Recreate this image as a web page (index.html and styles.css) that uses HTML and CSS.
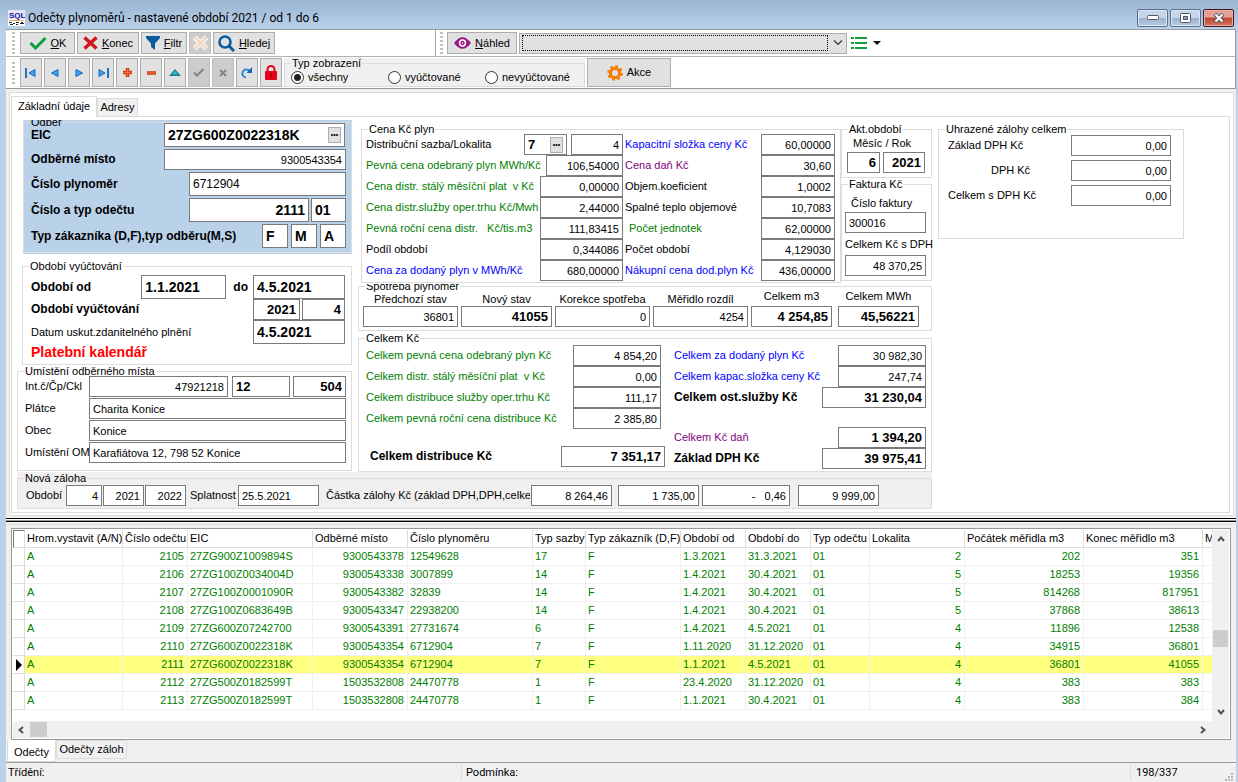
FILE: index.html
```html
<!DOCTYPE html>
<html lang="cs">
<head>
<meta charset="utf-8">
<title>Odečty plynoměrů</title>
<link rel="stylesheet" href="styles.css">
</head>
<body>
<div class="window">
<header class="titlebar">
  <svg class="app-icon" width="17" height="16" viewBox="0 0 17 16"><rect width="17" height="16" fill="#fff"/><rect y="0" width="17" height="9" fill="#e8e4f4"/><text x="1" y="8" class="logo-sql">SQL</text><path d="M1 10.500h15" stroke="#f6a56a"/><path d="M1 12.500h3M5 13.500h2M8 12.500h3M12 13.500h4M2 14.500h3M8 14.500h2M13 12.500h2" stroke="#222"/></svg>
  <h1>Odečty plynoměrů - nastavené období 2021 / od 1 do 6</h1>
  <div class="caption-buttons">
    <button class="cap" aria-label="Minimalizovat"><svg width="12" height="6" viewBox="0 0 12 6"><rect x=".5" y=".5" width="11" height="4" rx="1" fill="#fff" stroke="#535666"/></svg></button>
    <button class="cap" aria-label="Maximalizovat"><svg width="12" height="10" viewBox="0 0 12 10"><rect x=".5" y=".5" width="10" height="9" rx="1" fill="#fff" stroke="#535666"/><rect x="3.500" y="3.500" width="4" height="3" fill="#8fa9c8" stroke="#535666"/></svg></button>
    <button class="cap close" aria-label="Zavřít"><svg width="12" height="10" viewBox="0 0 12 10"><path d="M2 1l8 8M10 1L2 9" stroke="#535666" stroke-width="4"/><path d="M2.500 1.500l7 7M9.500 1.500l-7 7" stroke="#fff" stroke-width="2.200"/></svg></button>
  </div>
</header>

<div class="client">
<div class="toolbar row-one">
  <div class="band band-main">
    <span class="grip"></span>
    <button class="btn w-ok"><svg width="18" height="14" viewBox="0 0 18 14"><path d="M1.500 7l5 5L16.500 2" fill="none" stroke="#0f9d3f" stroke-width="3"/></svg><span><u>O</u>K</span></button>
    <button class="btn w-konec"><svg width="15" height="14" viewBox="0 0 15 14"><path d="M1.500 1.500l12 11M13.500 1.500l-12 11" stroke="#d2151c" stroke-width="3.500"/></svg><span><u>K</u>onec</span></button>
    <button class="btn w-filtr"><svg width="14" height="14" viewBox="0 0 14 14"><path d="M0 0h14v2L9 7.500V14L5 11V7.500L0 2z" fill="#0b5c9e"/></svg><span><u>F</u>iltr</span></button>
    <button class="btn w-clear off" disabled aria-label="Zrušit filtr"><svg width="17" height="16" viewBox="0 0 17 16"><path d="M2.500 2.500l12 11M14.500 2.500l-12 11" stroke="#fff" stroke-width="5"/><path d="M2.500 2.500l12 11M14.500 2.500l-12 11" stroke="#f0d8c4" stroke-width="3"/></svg></button>
    <button class="btn w-hledej"><svg width="17" height="17" viewBox="0 0 17 17"><circle cx="7" cy="7" r="5.500" fill="none" stroke="#0b5c9e" stroke-width="2.600"/><path d="M11 11l5 5" stroke="#0b5c9e" stroke-width="3"/></svg><span><u>H</u>ledej</span></button>
  </div>
  <div class="band band-view">
    <span class="grip"></span>
    <button class="btn w-nahled"><svg width="17" height="12" viewBox="0 0 17 12"><path d="M0 6Q8.500-5.500 17 6Q8.500 17.500 0 6z" fill="#9b1889"/><circle cx="8.500" cy="6" r="3.700" fill="#fff"/><circle cx="8.500" cy="6" r="2.200" fill="#9b1889"/><circle cx="8.500" cy="6" r=".8" fill="#fff"/></svg><span><u>N</u>áhled</span></button>
    <div class="combo"><select aria-label="Sestava"><option></option></select><svg width="10" height="6" viewBox="0 0 10 6"><path d="M1 .5l4 4 4-4" fill="none" stroke="#333" stroke-width="1.200"/></svg></div>
    <button class="bare" aria-label="Seznam"><svg width="16" height="12" viewBox="0 0 16 12"><path d="M0 1h3M4 1h12M0 6h3M4 6h12M0 11h3M4 11h12" stroke="#0f9d3f" stroke-width="2"/></svg><svg width="8" height="4" viewBox="0 0 8 4"><path d="M0 0h8L4 4z" fill="#111"/></svg></button>
  </div>
</div>

<div class="toolbar row-two">
  <span class="grip"></span>
  <button class="nav" aria-label="První"><svg width="14" height="10" viewBox="0 0 14 10"><path d="M2 0v10" stroke="#1e73c8" stroke-width="2"/><path d="M11 1.500v7L5 5z" fill="#3fa2ee" stroke="#1266c4"/></svg></button>
  <button class="nav" aria-label="Předchozí"><svg width="10" height="10" viewBox="0 0 10 10"><path d="M8 1.500v7L1.500 5z" fill="#3fa2ee" stroke="#1266c4"/></svg></button>
  <button class="nav" aria-label="Další"><svg width="10" height="10" viewBox="0 0 10 10"><path d="M2 1.500v7L8.500 5z" fill="#3fa2ee" stroke="#1266c4"/></svg></button>
  <button class="nav" aria-label="Poslední"><svg width="14" height="10" viewBox="0 0 14 10"><path d="M12 0v10" stroke="#1e73c8" stroke-width="2"/><path d="M3 1.500v7L9 5z" fill="#3fa2ee" stroke="#1266c4"/></svg></button>
  <button class="nav" aria-label="Přidat"><svg width="11" height="11" viewBox="0 0 11 11"><path d="M5.500 1v9M1 5.500h9" stroke="#c23a0a" stroke-width="3.500"/><path d="M5.500 1.500v8M1.500 5.500h8" stroke="#ff6a33" stroke-width="1.400"/></svg></button>
  <button class="nav" aria-label="Odebrat"><svg width="11" height="4" viewBox="0 0 11 4"><path d="M1 2h9" stroke="#c23a0a" stroke-width="3.500"/><path d="M1.500 2h8" stroke="#ff6a33" stroke-width="1.400"/></svg></button>
  <button class="nav" aria-label="Upravit"><svg width="12" height="7" viewBox="0 0 12 7"><path d="M6 0l6 7H0z" fill="#167f8c"/><path d="M6 1.500L9 5.500H3z" fill="#35bcc4"/></svg></button>
  <button class="nav off" disabled aria-label="Uložit"><svg width="12" height="9" viewBox="0 0 12 9"><path d="M1 4.500l3 3 6.500-6.500" fill="none" stroke="#858585" stroke-width="2.200"/></svg></button>
  <button class="nav off" disabled aria-label="Storno"><svg width="8" height="8" viewBox="0 0 8 8"><path d="M1 1l6 6M7 1L1 7" stroke="#858585" stroke-width="2"/></svg></button>
  <button class="nav" aria-label="Obnovit"><svg width="12" height="12" viewBox="0 0 12 12"><path d="M5 10.500A4 4 0 1 1 8.500 4" fill="none" stroke="#2787d2" stroke-width="2"/><path d="M11 0v6H5.500z" fill="#1266c4"/></svg></button>
  <button class="nav" aria-label="Zámek"><svg width="14" height="15" viewBox="0 0 14 15"><path d="M3.500 7V4.500a3.500 3.500 0 0 1 7 0V7" fill="none" stroke="#e2001a" stroke-width="2"/><rect x="1" y="6" width="12" height="9" rx="1" fill="#e2001a"/><path d="M7 8.500v3.500" stroke="#a00" stroke-width="2"/></svg></button>
  <div class="view-type">
    <fieldset class="group">
      <legend>Typ zobrazení</legend>
      <label><input type="radio" name="typ" checked>všechny</label>
      <label><input type="radio" name="typ">vyúčtované</label>
      <label><input type="radio" name="typ">nevyúčtované</label>
    </fieldset>
  </div>
  <button class="btn akce"><svg width="16" height="16" viewBox="0 0 16 16"><circle cx="8" cy="8" r="6.600" fill="none" stroke="#f57c00" stroke-width="2.400" stroke-dasharray="2.800 2.380"/><circle cx="8" cy="8" r="4.600" fill="none" stroke="#f57c00" stroke-width="3"/></svg><span>Akce</span></button>
</div>

<main class="form-frame">
  <nav class="tabs top-tabs"><button class="tab active">Základní údaje</button><button class="tab">Adresy</button></nav>
  <div class="form">
    <div class="col-left">
      <div class="blue-box">
        <fieldset class="group odber">
          <legend class="cut">Odběr</legend>
          <div class="row tall"><label class="b" for="eic">EIC</label><span class="picker eic w181"><input id="eic" class="big" value="27ZG600Z0022318K"><button aria-label="Vybrat EIC">•••</button></span></div>
          <div class="row"><label class="b" for="om">Odběrné místo</label><input id="om" class="num w182" value="9300543354"></div>
          <div class="row tall"><label class="b" for="cp">Číslo plynoměr</label><input id="cp" class="mid w157" value="6712904"></div>
          <div class="row tall"><label class="b" for="co">Číslo a typ odečtu</label><input id="co" class="num big w120" value="2111"><input class="big w35" value="01" aria-label="Typ odečtu"></div>
          <div class="row tall wide-gap"><label class="b" for="tz">Typ zákazníka (D,F),typ odběru(M,S)</label><input id="tz" class="big w26" value="F"><input class="big w26" value="M" aria-label="Typ odběru"><input class="big w26" value="A" aria-label="Vystavit"></div>
        </fieldset>
      </div>
      <fieldset class="group obdobi">
        <legend>Období vyúčtování</legend>
        <div class="row tall"><label class="b" for="od">Období od</label><input id="od" class="big w85" value="1.1.2021"><label class="b do" for="do">do</label><input id="do" class="big w92" value="4.5.2021"></div>
        <div class="row"><label class="b" for="ov">Období vyúčtování</label><input id="ov" class="num bold w47" value="2021"><input class="num bold w43" value="4" aria-label="Měsíc"></div>
        <div class="row tall"><label for="du">Datum uskut.zdanitelného plnění</label><input id="du" class="big w92" value="4.5.2021"></div>
        <a class="calendar" href="#">Platební kalendář</a>
      </fieldset>
      <fieldset class="group umisteni">
        <legend>Umístění odběrného místa</legend>
        <div class="row"><label for="ic">Int.č/Čp/Ckl</label><input id="ic" class="num w139" value="47921218"><input class="bold grow-a" value="12" aria-label="Čp"><input class="num bold w53" value="504" aria-label="Ckl"></div>
        <div class="row"><label for="pl">Plátce</label><input id="pl" class="grow" value="Charita Konice"></div>
        <div class="row"><label for="ob">Obec</label><input id="ob" class="grow" value="Konice"></div>
        <div class="row"><label for="uo">Umístění OM</label><input id="uo" class="grow" value="Karafiátova 12, 798 52 Konice"></div>
      </fieldset>
    </div>

    <div class="col-mid">
      <div class="upper">
        <fieldset class="group cena">
          <legend>Cena Kč plyn</legend>
          <div class="row"><label for="ds">Distribuční sazba/Lokalita</label><span class="picker w43"><input id="ds" class="bold" value="7"><button aria-label="Vybrat sazbu">•••</button></span><input class="num w52 g2" value="4" aria-label="Lokalita"><label class="second blue" for="ks">Kapacitní složka ceny Kč</label><input id="ks" class="num w74" value="60,00000"></div>
          <div class="row"><label class="green" for="pc">Pevná cena odebraný plyn MWh/Kč</label><input id="pc" class="num w77" value="106,54000"><label class="second purple" for="cd">Cena daň Kč</label><input id="cd" class="num w74" value="30,60"></div>
          <div class="row"><label class="green" for="cs">Cena distr. stálý měsíční plat&nbsp; v Kč</label><input id="cs" class="num w83" value="0,00000"><label class="second" for="ok">Objem.koeficient</label><input id="ok" class="num w74" value="1,0002"></div>
          <div class="row"><label class="green" for="ct">Cena distr.služby oper.trhu Kč/Mwh</label><input id="ct" class="num w83" value="2,44000"><label class="second" for="st">Spalné teplo objemové</label><input id="st" class="num w74" value="10,7083"></div>
          <div class="row"><label class="green" for="pr">Pevná roční cena distr.&nbsp;&nbsp; Kč/tis.m3</label><input id="pr" class="num w83" value="111,83415"><label class="second green indent" for="pj">Počet jednotek</label><input id="pj" class="num w74" value="62,00000"></div>
          <div class="row"><label for="po">Podíl období</label><input id="po" class="num w83" value="0,344086"><label class="second" for="pob">Počet období</label><input id="pob" class="num w74" value="4,129030"></div>
          <div class="row"><label class="blue" for="cz">Cena za dodaný plyn v MWh/Kč</label><input id="cz" class="num w83" value="680,00000"><label class="second blue" for="nc">Nákupní cena dod.plyn Kč</label><input id="nc" class="num w74" value="436,00000"></div>
        </fieldset>
        <div class="stack">
          <fieldset class="group akt">
            <legend>Akt.období</legend>
            <label class="over" for="am">Měsíc / Rok</label>
            <div class="row"><input id="am" class="num bold w33" value="6"><input class="num bold w42" value="2021" aria-label="Rok"></div>
          </fieldset>
          <fieldset class="group faktura">
            <legend>Faktura Kč</legend>
            <label class="over" for="cf">Číslo faktury</label>
            <input id="cf" class="w81" value="300016">
            <label class="under" for="cc">Celkem Kč s DPH</label>
            <input id="cc" class="num w81" value="48 370,25">
          </fieldset>
        </div>
      </div>
      <fieldset class="group spotreba">
        <legend class="cut">Spotřeba plynoměr</legend>
        <div class="cell w95"><label for="s1">Předchozí stav</label><input id="s1" class="num" value="36801"></div>
        <div class="cell w91"><label for="s2">Nový stav</label><input id="s2" class="num bold" value="41055"></div>
        <div class="cell w95"><label for="s3">Korekce spotřeba</label><input id="s3" class="num" value="0"></div>
        <div class="cell w95"><label for="s4">Měřidlo rozdíl</label><input id="s4" class="num" value="4254"></div>
        <div class="cell w81 up"><label for="s5">Celkem m3</label><input id="s5" class="num bold" value="4 254,85"></div>
        <div class="cell w81 up last"><label for="s6">Celkem MWh</label><input id="s6" class="num bold" value="45,56221"></div>
      </fieldset>
      <fieldset class="group celkem">
        <legend>Celkem Kč</legend>
        <div class="half first">
          <div class="row"><label class="green" for="c1">Celkem pevná cena odebraný plyn Kč</label><input id="c1" class="num w88" value="4 854,20"></div>
          <div class="row"><label class="green" for="c2">Celkem distr. stálý měsíční plat&nbsp; v Kč</label><input id="c2" class="num w88" value="0,00"></div>
          <div class="row"><label class="green" for="c3">Celkem distribuce služby oper.trhu Kč</label><input id="c3" class="num w88" value="111,17"></div>
          <div class="row"><label class="green" for="c4">Celkem pevná roční cena distribuce Kč</label><input id="c4" class="num w88" value="2 385,80"></div>
          <div class="row sum"><label class="b" for="c5">Celkem distribuce Kč</label><input id="c5" class="num bold w104" value="7 351,17"></div>
        </div>
        <div class="half">
          <div class="row"><label class="blue" for="d1">Celkem za dodaný plyn Kč</label><input id="d1" class="num w88" value="30 982,30"></div>
          <div class="row"><label class="blue" for="d2">Celkem kapac.složka ceny Kč</label><input id="d2" class="num w88" value="247,74"></div>
          <div class="row"><label class="b" for="d3">Celkem ost.služby Kč</label><input id="d3" class="num bold w104" value="31 230,04"></div>
          <div class="row tax"><label class="purple" for="d4">Celkem Kč daň</label><input id="d4" class="num bold w88" value="1 394,20"></div>
          <div class="row"><label class="b" for="d5">Základ DPH Kč</label><input id="d5" class="num bold w104" value="39 975,41"></div>
        </div>
      </fieldset>
    </div>

    <div class="col-right">
      <fieldset class="group uhrazene">
        <legend>Uhrazené zálohy celkem</legend>
        <div class="row"><label for="u1">Základ DPH Kč</label><input id="u1" class="num w100" value="0,00"></div>
        <div class="row"><label class="shift" for="u2">DPH Kč</label><input id="u2" class="num w100" value="0,00"></div>
        <div class="row"><label for="u3">Celkem s DPH Kč</label><input id="u3" class="num w100" value="0,00"></div>
      </fieldset>
    </div>

    <div class="advance">
      <fieldset class="group zaloha">
        <legend>Nová záloha</legend>
        <label class="z-obdobi" for="z1">Období</label><input id="z1" class="num w36" value="4"><input class="num w41" value="2021" aria-label="Rok od"><input class="num w41" value="2022" aria-label="Rok do">
        <label class="z-splat" for="z4">Splatnost</label><input id="z4" class="w81" value="25.5.2021">
        <label class="z-castka" for="z5">Částka zálohy Kč (základ DPH,DPH,celkem</label><input id="z5" class="num w81" value="8 264,46"><input class="num w81 g5" value="1 735,00" aria-label="DPH"><input class="num w88 g3" value="-&nbsp;&nbsp; 0,46" aria-label="Zaokrouhlení"><input class="num w81 g8" value="9 999,00" aria-label="Celkem">
      </fieldset>
    </div>
  </div>
</main>

<div class="splitter"></div>

<section class="list-frame">
  <div class="grid-box">
    <div class="grid-view">
      <div class="table-clip">
      <table>
        <colgroup><col class="c12"><col class="c98"><col class="c65"><col class="c125"><col class="c95"><col class="c125"><col class="c53"><col class="c95"><col class="c65"><col class="c65"><col class="c59"><col class="c95"><col class="c119"><col class="c119"><col class="c60"></colgroup>
        <thead><tr><th class="corner"></th><th>Hrom.vystavit (A/N)</th><th>Číslo odečtu</th><th>EIC</th><th>Odběrné místo</th><th>Číslo plynoměru</th><th>Typ sazby</th><th>Typ zákazník (D,F)</th><th>Období od</th><th>Období do</th><th>Typ odečtu</th><th>Lokalita</th><th>Počátek měřidla m3</th><th>Konec měřidlo m3</th><th>Měřidlo</th></tr></thead>
        <tbody>
          <tr><td></td><td>A</td><td class="r">2105</td><td>27ZG900Z1009894S</td><td class="r">9300543378</td><td>12549628</td><td>17</td><td>F</td><td>1.3.2021</td><td>31.3.2021</td><td>01</td><td class="r">2</td><td class="r">202</td><td class="r">351</td><td></td></tr>
          <tr><td></td><td>A</td><td class="r">2106</td><td>27ZG100Z0034004D</td><td class="r">9300543338</td><td>3007899</td><td>14</td><td>F</td><td>1.4.2021</td><td>30.4.2021</td><td>01</td><td class="r">5</td><td class="r">18253</td><td class="r">19356</td><td></td></tr>
          <tr><td></td><td>A</td><td class="r">2107</td><td>27ZG100Z0001090R</td><td class="r">9300543382</td><td>32839</td><td>14</td><td>F</td><td>1.4.2021</td><td>30.4.2021</td><td>01</td><td class="r">5</td><td class="r">814268</td><td class="r">817951</td><td></td></tr>
          <tr><td></td><td>A</td><td class="r">2108</td><td>27ZG100Z0683649B</td><td class="r">9300543347</td><td>22938200</td><td>14</td><td>F</td><td>1.4.2021</td><td>30.4.2021</td><td>01</td><td class="r">5</td><td class="r">37868</td><td class="r">38613</td><td></td></tr>
          <tr><td></td><td>A</td><td class="r">2109</td><td>27ZG600Z07242700</td><td class="r">9300543391</td><td>27731674</td><td>6</td><td>F</td><td>1.4.2021</td><td>4.5.2021</td><td>01</td><td class="r">4</td><td class="r">11896</td><td class="r">12538</td><td></td></tr>
          <tr><td></td><td>A</td><td class="r">2110</td><td>27ZG600Z0022318K</td><td class="r">9300543354</td><td>6712904</td><td>7</td><td>F</td><td>1.11.2020</td><td>31.12.2020</td><td>01</td><td class="r">4</td><td class="r">34915</td><td class="r">36801</td><td></td></tr>
          <tr class="current"><td class="mark"><svg width="6" height="12" viewBox="0 0 6 12"><path d="M0 0l6 6-6 6z" fill="#000"/></svg></td><td>A</td><td class="r">2111</td><td>27ZG600Z0022318K</td><td class="r">9300543354</td><td>6712904</td><td>7</td><td>F</td><td>1.1.2021</td><td>4.5.2021</td><td>01</td><td class="r">4</td><td class="r">36801</td><td class="r">41055</td><td></td></tr>
          <tr><td></td><td>A</td><td class="r">2112</td><td>27ZG500Z0182599T</td><td class="r">1503532808</td><td>24470778</td><td>1</td><td>F</td><td>23.4.2020</td><td>31.12.2020</td><td>01</td><td class="r">4</td><td class="r">383</td><td class="r">383</td><td></td></tr>
          <tr><td></td><td>A</td><td class="r">2113</td><td>27ZG500Z0182599T</td><td class="r">1503532808</td><td>24470778</td><td>1</td><td>F</td><td>1.1.2021</td><td>30.4.2021</td><td>01</td><td class="r">4</td><td class="r">383</td><td class="r">384</td><td></td></tr>
        </tbody>
      </table>
      </div>
      <div class="vscroll"><svg width="8" height="6" viewBox="0 0 8 6"><path d="M1 5l3-3.500L7 5" fill="none" stroke="#505050" stroke-width="2"/></svg><span class="space-a"></span><span class="thumb"></span><span class="space-b"></span><svg width="8" height="6" viewBox="0 0 8 6"><path d="M1 1l3 3.500L7 1" fill="none" stroke="#505050" stroke-width="2"/></svg></div>
    </div>
    <div class="hscroll"><svg width="6" height="8" viewBox="0 0 6 8"><path d="M5 1L1.500 4 5 7" fill="none" stroke="#505050" stroke-width="2"/></svg><span class="thumb"></span><span class="rest"></span><svg width="6" height="8" viewBox="0 0 6 8"><path d="M1 1l3.500 3L1 7" fill="none" stroke="#505050" stroke-width="2"/></svg></div>
  </div>
  <nav class="tabs bottom-tabs"><button class="tab active">Odečty</button><button class="tab">Odečty záloh</button></nav>
</section>

<footer class="status">
  <span class="s-sort">Třídění:</span><span class="s-cond">Podmínka:</span><span class="s-pos">198/337</span>
  <svg width="9" height="9" viewBox="0 0 9 9"><path d="M6 1h2M3 4h2M6 4h2M0 7h2M3 7h2M6 7h2" stroke="#b8b8b8" stroke-width="2"/></svg>
</footer>
</div>
</div>
</body>
</html>
```
FILE: styles.css
```css
* { box-sizing: border-box; }
body { margin: 0; background: #bad1ea; font: 11px/13px "Liberation Sans", Arial, sans-serif; color: #000; }
button, input, select { font: inherit; color: inherit; margin: 0; border-radius: 0; }
button { padding: 0; }
svg { display: block; flex: none; }
fieldset { margin: 0; padding: 0; min-width: 0; }

.window { display: flex; flex-direction: column; min-height: 100vh; }
.titlebar { display: flex; align-items: center; height: 29px; padding: 6px 4px 0 8px; gap: 3px; background: linear-gradient(#99b4d1, #bad1ea); }
.titlebar h1 { flex: 1; margin: 0; font: 12px/18px Roboto, sans-serif; }
.logo-sql { font: bold 8px "Liberation Sans", sans-serif; fill: #1a1aa0; }
.caption-buttons { display: flex; gap: 2px; }
.cap { display: flex; align-items: center; justify-content: center; width: 31px; height: 18px; border: 1px solid #5d6f8c; border-radius: 2px; background: linear-gradient(#c6d6ea 50%, #9bb2cf 50%, #b7cce4); box-shadow: inset 0 0 0 1px #dbe7f5; }
.close { border-color: #47121c; background: linear-gradient(#e3a195 45%, #bd4530 50%, #d37560); box-shadow: inset 0 0 0 1px #e7b3a8; }

.client { flex: 1; display: flex; flex-direction: column; margin: 0 2px 0 6px; background: #f0f0f0; border-top: 1px solid #999; }
.toolbar { display: flex; background: #fff; border-right: 1px solid #999; }
.row-one { height: 27px; border-bottom: 1px solid #b4b4b4; }
.row-two { height: 32px; align-items: center; gap: 2px; padding-left: 5px; border-bottom: 1px solid #999; }
.band { display: flex; align-items: center; gap: 2px; padding-left: 5px; }
.band-main { width: 430px; border-right: 1px solid #aaa; }
.band-view { flex: 1; padding-left: 4px; }
.grip { width: 3px; height: 22px; margin: 0 3px 0 1px; background: repeating-linear-gradient(#c0c0c0 0 2px, #fff 2px 4px); }
.band-view .grip { margin: 0 2px 0 0; }
.btn { display: flex; align-items: center; justify-content: center; gap: 4px; height: 22px; background: #e1e1e1; border: 1px solid #adadad; }
.off { background: #ccc; border-color: #bfbfbf; }
.w-ok { width: 55px; }
.w-konec { width: 62px; }
.w-filtr { width: 46px; }
.w-clear { width: 22px; }
.w-hledej { width: 62px; }
.w-nahled { width: 70px; }
.combo { display: flex; align-items: center; width: 328px; height: 21px; padding: 2px 3px 2px 2px; gap: 5px; background: #e1e1e1; border: 1px solid #adadad; }
.combo select { flex: 1; height: 16px; appearance: none; background: none; border: 1px dotted #000; }
.bare { display: flex; align-items: center; gap: 6px; margin-left: 2px; border: 0; background: none; }
.nav { display: flex; align-items: center; justify-content: center; width: 22px; height: 29px; background: #e1e1e1; border: 1px solid #adadad; }
.nav.off { background: #ccc; border-color: #bfbfbf; }
.akce { width: 84px; height: 29px; }
.view-type { width: 301px; height: 29px; padding-top: 5px; background: #f0f0f0; }
.view-type .group { display: flex; height: 24px; padding: 5px 0 0 6px; }
.view-type label { display: flex; align-items: center; gap: 4px; width: 97px; height: 17px; }
.view-type .group > legend { background: #f0f0f0; }
input[type="radio"] { appearance: none; width: 13px; height: 13px; border: 1px solid #333; border-radius: 50%; background: #fff; }
input[type="radio"]:checked { background: radial-gradient(#222 0 3px, #fff 4px); }

.group { position: relative; border: 1px solid #dcdcdc; }
.group > legend { position: absolute; top: -7px; left: 6px; padding: 0 1px; white-space: nowrap; background: linear-gradient(#fff 9px, transparent 9px); }
.group > legend.cut { display: flex; align-items: flex-end; top: -3px; height: 9px; overflow: hidden; }

.form-frame { margin: 3px 2px 0 3px; padding: 3px 3px 2px 1px; background: #fff; border: 1px solid #dcdcdc; }
.tabs { display: flex; }
.tab { position: relative; background: #f0f0f0; border: 1px solid #dcdcdc; white-space: nowrap; }
.top-tabs { align-items: flex-end; height: 20px; }
.top-tabs .tab { width: 41px; height: 18px; border-bottom: 0; }
.top-tabs .active { width: 86px; height: 21px; margin-bottom: -1px; padding-bottom: 2px; background: #fff; }
.form { display: grid; grid-template-columns: 335px 574px 1fr; column-gap: 6px; padding: 3px 4px 3px 5px; border: 1px solid #dcdcdc; }

.row { display: flex; align-items: center; gap: 2px; height: 21px; }
.row > label:first-child { flex: 1; min-width: 0; white-space: nowrap; }
.row > input { flex: none; }
.row.tall { height: 24px; }
.form input { height: 21px; padding: 0 3px; background: #fff; border: 1px solid #7a7a7a; }
.row.tall input { height: 24px; }
.form .num { text-align: right; padding: 0 3px; }
.form .bold { font-weight: bold; font-size: 13px; }
.form .big { font-weight: bold; font-size: 14px; }
.form .mid { font-size: 12px; }
.b { font-weight: bold; font-size: 12px; }
.green { color: #008000; }
.blue { color: #0000ff; }
.purple { color: #800080; }
.picker { display: flex; flex: none; align-items: center; height: 100%; padding-right: 3px; background: #fff; border: 1px solid #7a7a7a; }
.picker.eic { margin-right: 1px; }
.form .picker input { flex: 1; min-width: 0; height: 100%; border: 0; background: none; }
.picker button { width: 13px; height: 16px; font-size: 7px; line-height: 12px; background: #e1e1e1; border: 1px solid #adadad; }

.w26 { width: 26px; } .w33 { width: 33px; } .w35 { width: 35px; } .w36 { width: 36px; }
.w41 { width: 41px; } .w42 { width: 42px; } .w43 { width: 43px; } .w47 { width: 47px; }
.w52 { width: 52px; } .w53 { width: 53px; } .w74 { width: 74px; } .w77 { width: 77px; }
.w81 { width: 81px; } .w83 { width: 83px; } .w85 { width: 85px; } .w88 { width: 88px; }
.w91 { width: 91px; } .w92 { width: 92px; } .w95 { width: 95px; } .w100 { width: 100px; }
.w104 { width: 104px; } .w120 { width: 120px; } .w139 { width: 139px; } .w157 { width: 157px; }
.w181 { width: 181px; } .w182 { width: 182px; }

.blue-box { margin-left: 6px; padding: 2px 0 1px; background: #bad1ea; }
.odber { display: flex; flex-direction: column; gap: 2px; padding: 0 5px 4px 7px; }
.group.odber > legend { background: #bad1ea; }
.row.wide-gap { gap: 3px; }
.obdobi { margin: 12px 0 0 5px; padding: 8px 6px 4px 8px; }
.obdobi .do { padding: 0 3px 0 5px; }
.calendar { display: block; font: bold 14px/16px "Liberation Sans", sans-serif; color: #f00; text-decoration: none; }
.umisteni { display: flex; flex-direction: column; gap: 1px; margin-top: 6px; padding: 4px 5px 7px 7px; }
.umisteni .row > label:first-child { flex: none; width: 62px; }
.umisteni .row > .grow { flex: 1; min-width: 0; }
.umisteni .row > .grow-a { flex: 1; min-width: 0; margin: 0 1px 0 2px; }

.col-mid { padding-top: 9px; }
.upper { display: flex; margin-left: 3px; }
.cena { flex: none; width: 480px; height: 154px; padding: 4px 5px 0 4px; }
.cena .second { flex: none; width: 134px; white-space: nowrap; }
.cena .second.indent { padding-left: 4px; }
.g2 { margin-left: 2px; }
.stack { flex: 1; min-width: 0; display: flex; flex-direction: column; gap: 6px; }
.akt { height: 49px; padding: 5px 5px; }
.akt .row { gap: 3px; }
.over { display: block; padding-left: 6px; line-height: 17px; }
.faktura { height: 97px; padding: 10px 3px 0; white-space: nowrap; }
.faktura input { display: block; }
.under { display: block; line-height: 22px; }
.spotreba { display: flex; align-items: flex-end; gap: 3px; height: 45px; margin-top: 3px; padding: 0 4px 3px; }
.cell { display: flex; flex-direction: column; }
.cell label { text-align: center; }
.cell.up label { padding-bottom: 3px; }
.cell.last { margin-left: 3px; }
.celkem { display: flex; height: 134px; margin-top: 7px; padding: 6px 5px 0 7px; }
.half.first { flex: none; width: 299px; }
.half.first .row { padding-right: 4px; }
.half.first .row.sum { margin-top: 17px; padding: 0 0 0 4px; }
.half + .half { flex: 1; padding-left: 9px; }
.tax { margin-top: 19px; }

.col-right { padding: 9px 0 0 0; }
.uhrazene { display: flex; flex-direction: column; gap: 4px; width: 246px; height: 110px; padding: 5px 12px 0 9px; }
.shift { padding-left: 43px; }

.advance { grid-column: 1 / 3; padding: 6px 0 0; background: #f0f0f0; }
.zaloha { display: flex; align-items: center; gap: 1px; height: 31px; padding: 4px 0 0 8px; white-space: nowrap; }
.group.zaloha > legend { background: #f0f0f0; }
.z-obdobi { width: 39px; }
.z-splat { width: 50px; padding-left: 3px; }
.z-castka { width: 210px; padding-left: 6px; overflow: hidden; }
.g3 { margin-left: 2px; } .g5 { margin-left: 5px; } .g8 { margin-left: 7px; }

.splitter { height: 7px; margin-top: 1px; background: linear-gradient(#f0f0f0 0 1px, #000 1px 2px, #fff 2px 3px, #999 3px 4px, #000 4px 5px, #f0f0f0 5px); }

.list-frame { margin: 0 2px 0 1px; border-top: 1px solid #dcdcdc; background: #f0f0f0; }
.grid-box { margin: 3px 3px 0 4px; padding: 1px; background: #fff; border: 1px solid #999; }
.grid-view { display: flex; height: 191px; }
.table-clip { flex: 1; min-width: 0; overflow: hidden; }
table { table-layout: fixed; width: 1250px; border-collapse: separate; border-spacing: 0; }
th, td { height: 18px; padding: 0 2px; overflow: hidden; white-space: nowrap; text-align: left; font-weight: normal; border-right: 1px solid #f0f0f0; border-bottom: 1px solid #f0f0f0; }
th { border-color: #dcdcdc; }
th.corner { border-left: 1px solid #777; border-top: 1px solid #777; }
td { color: #008000; }
td:first-child { border-color: #dcdcdc; }
.r { text-align: right; padding-right: 3px; }
.current td { background: #ffff80; }
.current td.mark { background: #fff; padding-left: 3px; }
.c12 { width: 12px; } .c98 { width: 98px; } .c65 { width: 65px; } .c125 { width: 125px; }
.c95 { width: 95px; } .c53 { width: 53px; } .c59 { width: 59px; } .c119 { width: 119px; } .c60 { width: 60px; }
.vscroll { display: flex; flex-direction: column; align-items: center; width: 17px; padding: 6px 0; background: #f0f0f0; }
.thumb { width: 15px; height: 17px; background: #cdcdcd; }
.space-a { flex: 89; } .space-b { flex: 63; }
.hscroll { display: flex; align-items: center; height: 17px; padding: 0 23px 0 5px; background: #f0f0f0; }
.hscroll .thumb { width: 17px; height: 15px; margin-left: 6px; }
.rest { flex: 1; }
.bottom-tabs { align-items: flex-start; height: 22px; }
.bottom-tabs .tab { width: 71px; height: 19px; border-top-color: #dcdcdc; }
.bottom-tabs .active { width: 49px; height: 22px; padding-top: 3px; background: #fff; border-top-color: #fff; }

.status { display: flex; flex: 1; align-items: center; min-height: 19px; padding: 0 2px 0 2px; border-top: 1px solid #999; font: 11px/16px Roboto, sans-serif; }
.s-sort { width: 453px; }
.s-cond { flex: 1; padding-left: 4px; border-left: 1px solid #dcdcdc; }
.s-pos { width: 95px; padding-left: 5px; border-left: 1px solid #dcdcdc; }
.status svg { align-self: flex-end; }
```
